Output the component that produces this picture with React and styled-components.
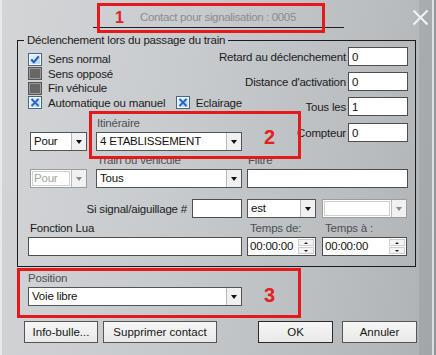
import React from 'react';
import styled, { createGlobalStyle } from 'styled-components';

const GlobalStyle = createGlobalStyle`
  html, body {
    margin: 0;
    padding: 0;
  }
  body {
    font-family: "Liberation Sans", Arial, sans-serif;
    font-size: 11.5px;
    letter-spacing: -0.2px;
    color: #1b1b1b;
  }
  * {
    box-sizing: border-box;
  }
`;

const Window = styled.div`
  position: relative;
  width: 436px;
  height: 355px;
  overflow: hidden;
  background:
    linear-gradient(to right,
      rgba(0, 0, 0, 0) 419px,
      rgba(50, 55, 60, 0.1) 419px,
      rgba(50, 55, 60, 0.1) 432px,
      rgba(255, 255, 255, 0.55) 432px,
      rgba(255, 255, 255, 0.55) 434px,
      rgba(50, 55, 60, 0.25) 434px),
    linear-gradient(100deg, #d3d5d7 0%, #c8cbce 40%, #bbbec1 75%, #afb2b5 100%);
  box-shadow: inset 2px 0 0 #e8e9ea;
`;

/* title */
const TitleBar = styled.div`
  height: 33px;
  display: flex;
  justify-content: center;
  align-items: flex-start;
`;

const Caption = styled.div`
  width: 251px;
  padding: 11px 0 3px;
  line-height: 13px;
  text-align: center;
  font-size: 11.5px;
  letter-spacing: -0.35px;
  color: #8a8c8f;
  border-bottom: 1px solid #1e1e1e;
`;

const CloseButton = styled.div`
  position: absolute;
  top: 9px;
  right: 7px;
  width: 17px;
  height: 17px;
`;

/* body */
const Body = styled.div`
  padding: 0 20px 0 17px;
`;

const Group = styled.fieldset`
  margin: 0;
  min-width: 0;
  width: 399px;
  padding: 0 7px 10px 10px;
  border: 1px solid #1c1c1c;
`;

const GroupLegend = styled.legend`
  margin-left: -4px;
  padding: 0 3px;
  line-height: 14px;
`;

const TopSection = styled.div`
  display: flex;
  gap: 5px;
`;

const LeftPart = styled.div`
  width: 214px;
  display: flex;
  flex-direction: column;
`;

const CheckList = styled.div`
  margin-top: 5px;
  display: flex;
  flex-direction: column;
`;

const CheckRow = styled.div`
  display: flex;
  align-items: center;
  height: 14.5px;
  white-space: nowrap;
`;

const CheckItem = styled.label`
  display: flex;
  align-items: center;
  gap: 6px;
  width: ${p => (p.$width ? `${p.$width}px` : 'auto')};
`;

const CheckBox = styled.span`
  flex: none;
  width: 14px;
  height: 13px;
  display: inline-flex;
  align-items: center;
  justify-content: center;
  border: 1px solid ${p => (p.$off ? '#555' : '#47678a')};
  background: ${p => (p.$off ? '#676767' : 'linear-gradient(135deg, #eef6fd, #b3d3ee)')};
  box-shadow: inset 0 0 0 1px ${p => (p.$off ? '#9b9b9b' : '#f4f8fc')};
`;

const RightPart = styled.div`
  width: 161px;
  display: flex;
  flex-direction: column;
  gap: 6px;
`;

const ValueRow = styled.div`
  display: flex;
  align-items: center;
  justify-content: flex-end;
  gap: 2px;
  height: 19px;
  white-space: nowrap;
  margin-top: ${p => (p.$shift ? `${p.$shift}px` : '0')};
`;

const TextBox = styled.input`
  width: ${p => p.$w}px;
  height: 19px;
  padding: 0 3px;
  border: 1px solid #4e4e4e;
  background: #fff;
  font: inherit;
  font-size: 11.5px;
  color: #111;
  outline: none;
`;

const ControlRow = styled.div`
  display: flex;
  align-items: ${p => p.$align || 'flex-end'};
  gap: ${p => p.$gap || 5}px;
  margin-top: ${p => p.$top || 0}px;
`;

const Field = styled.div`
  display: flex;
  flex-direction: column;
  gap: 2px;
  width: ${p => p.$w}px;
  margin-left: ${p => p.$left || 0}px;
`;

const FieldLabel = styled.span`
  line-height: 13px;
  padding-left: ${p => p.$pad ?? 1}px;
  white-space: nowrap;
  color: ${p => (p.$muted ? '#4d4f52' : '#1b1b1b')};
`;

const SideLabel = styled.span`
  width: ${p => p.$w}px;
  text-align: right;
  white-space: nowrap;
`;

/* combo box */
const ComboBox = styled.div`
  display: flex;
  width: 100%;
  height: 19px;
  border: 1px solid ${p => (p.$disabled ? '#9d9d9d' : '#545454')};
  background: #fff;
`;

const ComboText = styled.div`
  flex: 1;
  margin: ${p => (p.$disabled ? '1px' : '0')};
  padding-left: ${p => (p.$disabled ? '2px' : '3px')};
  line-height: ${p => (p.$disabled ? '15px' : '17px')};
  white-space: nowrap;
  overflow: hidden;
  color: ${p => (p.$disabled ? '#a3a3a3' : '#111')};
  box-shadow: ${p => (p.$disabled ? 'inset 0 0 0 1px #cfcfcf' : 'none')};
`;

const ComboArrow = styled.div`
  width: 15px;
  display: flex;
  align-items: center;
  justify-content: center;
  background: #f1f1f1;
  border-left: 1px solid #b9b9b9;

  &::after {
    content: '';
    border-left: 3.5px solid transparent;
    border-right: 3.5px solid transparent;
    border-top: 4px solid ${p => (p.$disabled ? '#8a8a8a' : '#111')};
  }
`;

/* spinner */
const SpinBox = styled.div`
  display: flex;
  width: 100%;
  height: 19px;
  border: 1px solid #4e4e4e;
  background: #fff;
`;

const SpinText = styled.div`
  flex: 1;
  padding-left: 2px;
  line-height: 17px;
  color: #111;
`;

const SpinButtons = styled.div`
  width: 17px;
  padding: 1px 1px 1px 0;
  display: flex;
  flex-direction: column;
  gap: 1px;
`;

const SpinButton = styled.div`
  flex: 1;
  display: flex;
  align-items: center;
  justify-content: center;
  background: #f3f3f3;
  border: 1px solid #cdcdcd;

  &::after {
    content: '';
    border-left: 2px solid transparent;
    border-right: 2px solid transparent;
    ${p => (p.$down ? 'border-top' : 'border-bottom')}: 2px solid #222;
  }
`;

/* bottom */
const PositionBlock = styled.div`
  margin: 5px 0 0 11px;
`;

const ButtonBar = styled.div`
  display: flex;
  justify-content: space-between;
  margin: 15px -1px 0 7px;
`;

const ButtonGroup = styled.div`
  display: flex;
  gap: ${p => p.$gap}px;
`;

const Button = styled.button`
  width: ${p => p.$w}px;
  height: 22px;
  padding: 0;
  border: 1px solid ${p => (p.$default ? '#2a2a2a' : '#555')};
  border-radius: 0;
  background: linear-gradient(#f6f6f6, #e9e9e9);
  font: inherit;
  font-size: 11.5px;
  color: #151515;
`;

/* annotations drawn over the dialog */
const Annotation = styled.div`
  position: absolute;
  left: ${p => p.$x}px;
  top: ${p => p.$y}px;
  width: ${p => p.$w}px;
  height: ${p => p.$h}px;
  border: 3px solid #e5191a;
  pointer-events: none;
`;

const Marker = styled.span`
  position: absolute;
  left: ${p => p.$x}px;
  top: ${p => p.$y}px;
  font-weight: bold;
  font-size: ${p => p.$size}px;
  letter-spacing: 0;
  line-height: 1;
  color: #e3201d;
`;

function Check({ kind }) {
  return (
    <CheckBox $off={kind === 'off'}>
      {kind === 'check' && (
        <svg width="10" height="9" viewBox="0 0 10 9">
          <path d="M1.2 4.6 L3.8 7.3 L8.8 1.4" fill="none" stroke="#1d5fc4" strokeWidth="2.1" />
        </svg>
      )}
      {kind === 'x' && (
        <svg width="10" height="9" viewBox="0 0 10 9">
          <path d="M1.5 1 L8.5 8 M8.5 1 L1.5 8" fill="none" stroke="#2466c6" strokeWidth="1.9" />
        </svg>
      )}
    </CheckBox>
  );
}

function Combo({ value, disabled }) {
  return (
    <ComboBox $disabled={disabled}>
      <ComboText $disabled={disabled}>{value}</ComboText>
      <ComboArrow $disabled={disabled} />
    </ComboBox>
  );
}

function Spinner({ value }) {
  return (
    <SpinBox>
      <SpinText>{value}</SpinText>
      <SpinButtons>
        <SpinButton />
        <SpinButton $down />
      </SpinButtons>
    </SpinBox>
  );
}

export default function App() {
  return (
    <Window>
      <GlobalStyle />
      <TitleBar>
        <Caption>Contact pour signalisation : 0005</Caption>
      </TitleBar>
      <CloseButton>
        <svg width="17" height="17" viewBox="0 0 17 17">
          <path d="M1.5 1.5 L15.5 15.5 M15.5 1.5 L1.5 15.5" stroke="#f3f4f5" strokeWidth="2" />
        </svg>
      </CloseButton>

      <Body>
        <Group>
          <GroupLegend>Déclenchement lors du passage du train</GroupLegend>

          <TopSection>
            <LeftPart>
              <CheckList>
                <CheckRow>
                  <CheckItem><Check kind="check" />Sens normal</CheckItem>
                </CheckRow>
                <CheckRow>
                  <CheckItem><Check kind="off" />Sens opposé</CheckItem>
                </CheckRow>
                <CheckRow>
                  <CheckItem><Check kind="off" />Fin véhicule</CheckItem>
                </CheckRow>
                <CheckRow>
                  <CheckItem $width={160}><Check kind="x" />Automatique ou manuel</CheckItem>
                  <CheckItem><Check kind="x" />Eclairage</CheckItem>
                </CheckRow>
              </CheckList>

              <ControlRow $gap={9} $top={7}>
                <Field $w={57} $left={2}>
                  <Combo value="Pour" />
                </Field>
                <Field $w={146}>
                  <FieldLabel $muted>Itinéraire</FieldLabel>
                  <Combo value="4 ETABLISSEMENT" />
                </Field>
              </ControlRow>
            </LeftPart>

            <RightPart>
              <ValueRow>
                Retard au déclenchement
                <TextBox $w={60} readOnly value="0" />
              </ValueRow>
              <ValueRow>
                Distance d'activation
                <TextBox $w={60} readOnly value="0" />
              </ValueRow>
              <ValueRow>
                Tous les
                <TextBox $w={60} readOnly value="1" />
              </ValueRow>
              <ValueRow $shift={1}>
                Compteur
                <TextBox $w={60} readOnly value="0" />
              </ValueRow>
            </RightPart>
          </TopSection>

          <ControlRow $top={3}>
            <Field $w={57} $left={2}>
              <Combo value="Pour" disabled />
            </Field>
            <Field $w={146} $left={4}>
              <FieldLabel $muted>Train ou véhicule</FieldLabel>
              <Combo value="Tous" />
            </Field>
            <Field $w={161}>
              <FieldLabel $muted>Filtre</FieldLabel>
              <TextBox $w={161} readOnly value="" />
            </Field>
          </ControlRow>

          <ControlRow $top={11} $align="center">
            <SideLabel $w={159}>Si signal/aiguillage #</SideLabel>
            <TextBox $w={50} readOnly value="" />
            <Field $w={69}>
              <Combo value="est" />
            </Field>
            <Field $w={85} $left={1}>
              <Combo value="" disabled />
            </Field>
          </ControlRow>

          <ControlRow $top={4}>
            <Field $w={214}>
              <FieldLabel $pad={2}>Fonction Lua</FieldLabel>
              <TextBox $w={214} readOnly value="" />
            </Field>
            <Field $w={69}>
              <FieldLabel $pad={3} $muted>Temps de:</FieldLabel>
              <Spinner value="00:00:00" />
            </Field>
            <Field $w={85} $left={1}>
              <FieldLabel $pad={3} $muted>Temps à :</FieldLabel>
              <Spinner value="00:00:00" />
            </Field>
          </ControlRow>
        </Group>

        <PositionBlock>
          <Field $w={214}>
            <FieldLabel $pad={0} $muted>Position</FieldLabel>
            <Combo value="Voie libre" />
          </Field>
        </PositionBlock>

        <ButtonBar>
          <ButtonGroup $gap={5}>
            <Button $w={74}>Info-bulle...</Button>
            <Button $w={114}>Supprimer contact</Button>
          </ButtonGroup>
          <ButtonGroup $gap={9}>
            <Button $w={75} $default>OK</Button>
            <Button $w={75}>Annuler</Button>
          </ButtonGroup>
        </ButtonBar>
      </Body>

      <Annotation $x={97} $y={3} $w={228} $h={30} />
      <Marker $x={115} $y={10} $size={16}>1</Marker>
      <Annotation $x={89} $y={111} $w={212} $h={48} />
      <Marker $x={264} $y={127} $size={20}>2</Marker>
      <Annotation $x={17} $y={268} $w={284} $h={50} />
      <Marker $x={264} $y={285} $size={20}>3</Marker>
    </Window>
  );
}
